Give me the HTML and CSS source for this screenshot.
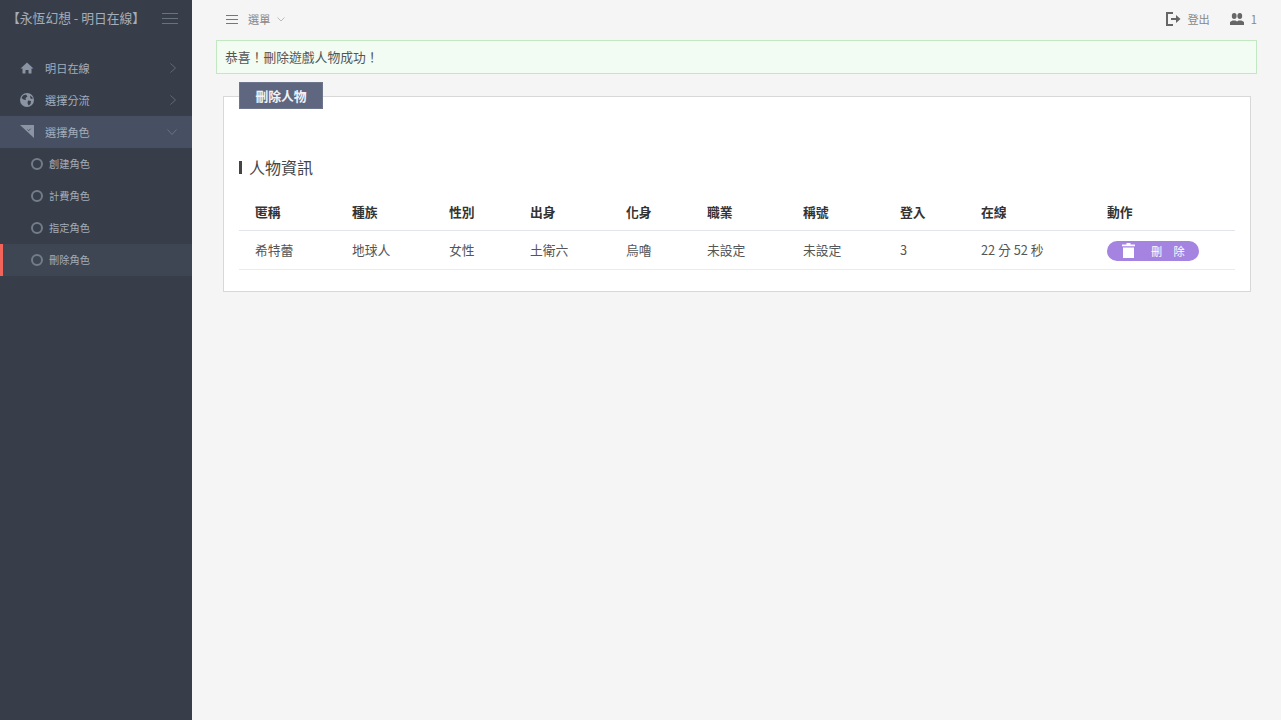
FILE: index.html
```html
<!DOCTYPE html>
<html lang="zh-Hant">
<head>
<meta charset="utf-8">
<title>永恆幻想</title>
<link rel="stylesheet" href="styles.css">
</head>
<body>
<div class="app">
  <aside class="sidebar">
    <div class="brand">
      <span class="brand-name">【永恆幻想 - 明日在線】</span>
      <svg class="burger" viewBox="0 0 16 11" width="16" height="11"><path d="M0 .5h16M0 5.500h16M0 10.500h16" stroke="#69727f" stroke-width="1" fill="none"/></svg>
    </div>
    <nav class="nav">
      <a class="nav-item">
        <svg class="nav-icon" viewBox="0 0 14 14" width="14" height="14"><path d="M7 1.500 .5 7.500H2.500V12.500H5.500V9H8.500V12.500H11.500V7.500H13.500Z" fill="#8b94a3"/></svg>
        <span class="nav-label">明日在線</span>
        <svg class="chev" viewBox="0 0 6 10" width="6" height="10"><path d="M.5.500l5 4.500-5 4.500" stroke="#616a78" fill="none"/></svg>
      </a>
      <a class="nav-item">
        <svg class="nav-icon" viewBox="0 0 14 14" width="14" height="14"><circle cx="7" cy="7" r="7" fill="#8b94a3"/><path d="M3 2.500 6 1.500 7.500 3.500 5.500 5 6 7 3.500 6.500 1.500 5ZM8 7.500 11 8 10.500 11 8.500 12.500 7.500 10ZM10 2.500 12.500 4.500 12.500 6 10.500 5.500Z" fill="#373e4a"/></svg>
        <span class="nav-label">選擇分流</span>
        <svg class="chev" viewBox="0 0 6 10" width="6" height="10"><path d="M.5.500l5 4.500-5 4.500" stroke="#616a78" fill="none"/></svg>
      </a>
      <a class="nav-item open">
        <svg class="nav-icon" viewBox="0 0 14 14" width="14" height="14"><path d="M0 0H14V13Z" fill="#8b94a3"/><path d="M7.500 4.500l1.200 1.200 2-2" stroke="#465062" fill="none"/></svg>
        <span class="nav-label">選擇角色</span>
        <svg class="chev-down" viewBox="0 0 10 6" width="10" height="6"><path d="M.5.500l4.500 5 4.500-5" stroke="#69727f" fill="none"/></svg>
      </a>
      <a class="sub-item"><span class="ring"></span>創建角色</a>
      <a class="sub-item"><span class="ring"></span>計費角色</a>
      <a class="sub-item"><span class="ring"></span>指定角色</a>
      <a class="sub-item current"><span class="ring"></span>刪除角色</a>
    </nav>
  </aside>
  <main class="main">
    <header class="topbar">
      <div class="menu">
        <svg class="menu-icon" viewBox="0 0 12 9" width="12" height="9"><path d="M0 .5h12M0 4.500h12M0 8.500h12" stroke="#777" fill="none"/></svg>
        <span class="menu-label">選單</span>
        <svg class="menu-chev" viewBox="0 0 8 5" width="8" height="5"><path d="M.5.500 4 4 7.500.5" stroke="#bbb" fill="none"/></svg>
      </div>
      <div class="tools">
        <span class="tool logout">
          <svg viewBox="0 0 15 14" width="15" height="14"><path d="M7 1H1V13H7" stroke="#666" stroke-width="2" fill="none"/><path d="M5 6H10V3L14.500 7 10 11V8H5Z" fill="#666"/></svg>
          <span class="tool-label">登出</span>
        </span>
        <span class="tool users">
          <svg viewBox="0 0 14 12" width="14" height="12"><ellipse cx="4.200" cy="3" rx="2.400" ry="3" fill="#666"/><ellipse cx="9.800" cy="3" rx="2.400" ry="3" fill="#666"/><path d="M0 12V9L2.500 7.500H5.500L7 8.500 8.500 7.500H11.500L14 9V12Z" fill="#666"/></svg>
          <span class="tool-label">1</span>
        </span>
      </div>
    </header>
    <div class="alert">恭喜！刪除遊戲人物成功！</div>
    <section class="card">
      <h2 class="card-tab">刪除人物</h2>
      <h3 class="section-title">人物資訊</h3>
      <table class="table">
        <colgroup>
          <col class="c97"><col class="c97"><col class="c81"><col class="c96"><col class="c81"><col class="c96"><col class="c97"><col class="c81"><col class="c126"><col class="c144">
        </colgroup>
        <thead>
          <tr><th>匿稱</th><th>種族</th><th>性別</th><th>出身</th><th>化身</th><th>職業</th><th>稱號</th><th>登入</th><th>在線</th><th>動作</th></tr>
        </thead>
        <tbody>
          <tr>
            <td>希特蕾</td><td>地球人</td><td>女性</td><td>土衛六</td><td>烏嚕</td><td>未設定</td><td>未設定</td><td>3</td><td>22 分 52 秒</td>
            <td><button class="del-btn"><svg viewBox="0 0 13 15" width="13" height="15"><path d="M4.500 0H8.500V1.500H13V3.200H0V1.500H4.500ZM1 4.500H12V15H1Z" fill="#fff"/></svg><span class="del-text">刪　除</span></button></td>
          </tr>
        </tbody>
      </table>
    </section>
  </main>
</div>
</body>
</html>
```

FILE: styles.css
```css
* { box-sizing: border-box; }
html, body { margin: 0; height: 100%; }
body {
  font-family: "Noto Sans CJK TC", "Noto Sans", sans-serif;
  font-size: 12.800px;
  color: #444;
  background: #f5f5f5;
  overflow: hidden;
}
.app { display: flex; height: 720px; }

.sidebar { width: 192px; flex: none; background: #373e4a; color: #b4bcc8; }
.brand {
  height: 52px;
  padding: 0 14px 18px 7px;
  display: flex;
  align-items: center;
  justify-content: space-between;
}
.brand-name { font-size: 12.800px; color: #a4adba; white-space: nowrap; }
.burger { display: block; margin-top: 3px; }
.nav { display: flex; flex-direction: column; }
.nav-item {
  height: 32px;
  display: flex;
  align-items: center;
  padding: 0 16px 0 20px;
  font-size: 11.200px;
  color: #a4adba;
}
.nav-item.open { background: #465062; }
.nav-icon { flex: none; margin-right: 11px; }
.nav-label { flex: 1; }
.chev-down { margin-right: -1px; }
.sub-item {
  height: 32px;
  display: flex;
  align-items: center;
  padding: 0 0 1px 31px;
  font-size: 10.240px;
  color: #a4adba;
}
.sub-item.current { background: #3e4654; box-shadow: inset 3px 0 0 #f2635a; }
.ring {
  width: 12px;
  height: 12px;
  border: 2px solid #737c8a;
  border-radius: 50%;
  margin: 1px 6px 0 0;
}

.main { flex: 1; min-width: 0; padding: 0 24px; }
.topbar {
  height: 40px;
  padding: 0 0 2px 10px;
  display: flex;
  align-items: center;
  justify-content: space-between;
}
.menu { display: flex; align-items: center; color: #888; font-size: 11.200px; }
.menu-icon { margin-right: 10px; }
.menu-chev { margin-left: 7px; }
.tools { display: flex; align-items: center; gap: 20px; }
.tool { display: flex; align-items: center; gap: 7px; font-size: 11.200px; color: #888; }
.logout { gap: 6px; }
.alert {
  height: 34px;
  border: 1px solid #c3e6c3;
  background: #f2fcf3;
  padding: 0 8px;
  font-size: 12.800px;
  line-height: 32px;
  color: #555;
}
.card {
  position: relative;
  margin: 22px 6px 0 7px;
  height: 196px;
  background: #fff;
  border: 1px solid #d8d8d8;
  padding: 0 15px;
}
.card-tab {
  position: absolute;
  left: 15px;
  top: -15px;
  margin: 0;
  width: 84px;
  height: 27px;
  background: #5f6780;
  border: 1px solid #6d758c;
  color: #f2f2f6;
  font-size: 12.800px;
  font-weight: 700;
  line-height: 25px;
  text-align: center;
}
.section-title {
  margin: 0;
  padding: 59px 0 0 0;
  font-size: 16px;
  font-weight: 400;
  line-height: 22px;
  color: #444;
  display: flex;
  align-items: center;
}
.section-title::before {
  content: "";
  width: 3px;
  height: 13px;
  background: #444;
  margin-right: 7px;
}
.table { width: 996px; border-collapse: collapse; table-layout: fixed; margin-top: 15px; }
.c97 { width: 97px; }
.c81 { width: 81px; }
.c96 { width: 96px; }
.c126 { width: 126px; }
.c144 { width: 144px; }
th, td { padding: 0 16px; text-align: left; font-size: 12.800px; white-space: nowrap; }
th { height: 37px; font-weight: 700; color: #333; border-bottom: 1px solid #e2e5ec; }
td { height: 39px; padding-bottom: 1px; color: #555; border-bottom: 1px solid #e9ebef; }
.del-btn {
  width: 92px;
  height: 20px;
  margin-top: 3px;
  border: 0;
  border-radius: 10px;
  background: #a583e0;
  color: #fff;
  display: flex;
  align-items: center;
  padding: 0 0 0 15px;
  font: inherit;
  font-size: 11.200px;
}
.del-text { margin-left: 16px; }
```
